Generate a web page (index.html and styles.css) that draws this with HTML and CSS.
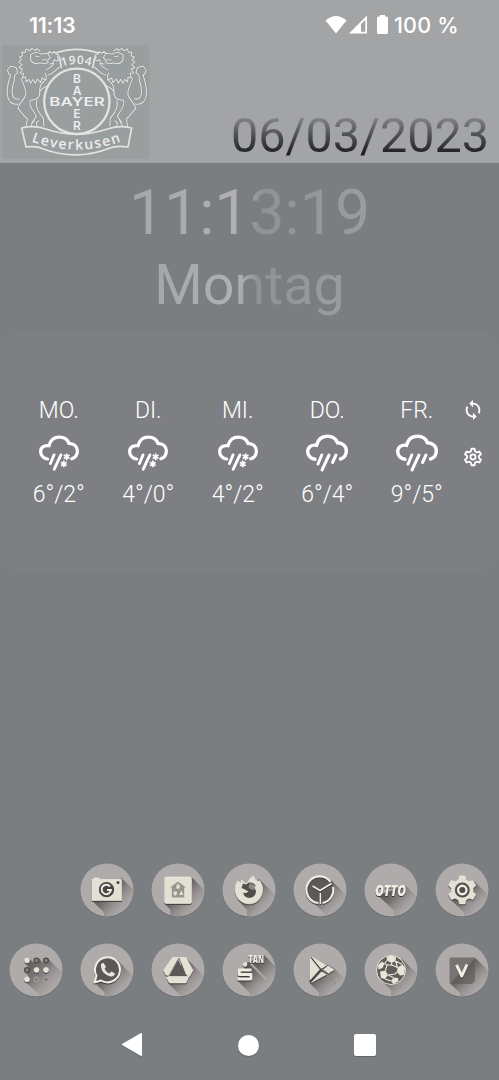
FILE: index.html
```html
<!DOCTYPE html>
<html lang="de">
<head>
  <meta charset="UTF-8" />
  <title>Homescreen</title>
  <link rel="stylesheet" href="styles.css">
</head>
<body>

<!--  SHARED SHAPES  -->
<svg class="defs" width="0" height="0">
  <defs>
    <linearGradient id="fade" gradientUnits="userSpaceOnUse" x1="22" y1="22" x2="45" y2="45">
      <stop offset="0" stop-color="#4f4c4b"/>
      <stop offset="0.4" stop-color="#6a6665" stop-opacity=".9"/>
      <stop offset="1" stop-color="#a39e9e" stop-opacity=".3"/>
    </linearGradient>
    <clipPath id="round"><circle cx="27" cy="27" r="26.5"/></clipPath>
    <g id="disc">
      <circle cx="27" cy="27.6" r="26.7" fill="#656768"/>
      <circle cx="27" cy="27" r="26.6" fill="#b0abab"/>
    </g>
    <g id="cloud" fill="none" stroke="#fff" stroke-linecap="round">
      <path stroke-width="3.4" d="M9 24.800C5 24.500 1.700 21 1.700 17C1.700 12.800 5 10 10.500 10.800C12 5 16 1.800 21.300 1.800C26.500 1.800 30 4.500 31.500 8.300C36.500 8.300 40.300 11.600 40.300 16.200C40.300 20.500 38 23.500 34.500 24.500"/>
      <path stroke-width="3" d="M15.800 20.500L12 29.500M23 20.500L16 35.500"/>
    </g>
    <path id="flakes" d="M29 19V26M26 20.700L32 24.300M32 20.700L26 24.300M26 26.500V33.500M23 28.200L29 31.800M29 28.200L23 31.800"/>
  </defs>
</svg>

<header>
  <div class="status">
    <span class="clock">11:13</span>
    <svg class="signals" width="63" height="20" viewBox="0 0 63 20">
      <path fill="#fff" d="M.5 5.500Q11 -3.500 21.500 5.500L11 18.500Z"/>
      <path fill="#fff" fill-rule="evenodd" d="M24 18.500L42 .5V18.500ZM36 16.800H40.300V5L36 9Z"/>
      <path fill="#fff" d="M55 0H60V1.500H61.500Q63 1.500 63 3V17.500Q63 19 61.500 19H53.500Q52 19 52 17.500V3Q52 1.500 53.500 1.500H55Z"/>
    </svg>
    <span class="percent">100 %</span>
  </div>
  <div class="banner">
    <svg class="crest" width="147" height="114" viewBox="6 135 441 342">
      <defs>
        <path id="ribbonLine" d="M94 424Q230 474 368 423"/>
        <path id="yearLine" d="M186 200Q230 184 278 199"/>
        <g id="lion">
          <path d="M22 210L32 198L49 203L53 218L44 226L43 240C36 262 32 280 41 292Q47 300 59 296M22 210L27 222L32 225C20 260 17 290 31 306Q42 316 56 311"/>
          <path d="M120 153L110 146L106 152L96 145L90 152L78 147L76 157L65 156L68 167L58 171L65 179L56 187L66 193L57 203L68 207L60 219L71 220L67 234L77 231L78 246L87 238L92 250L99 238L106 250L112 237L122 248L126 234L137 240L139 228L134 218"/>
          <path d="M92 164Q108 152 124 162L143 160L151 173L143 181L144 188L131 191L120 188Q101 196 92 181ZM105 168L118 170M126 180L141 179"/>
          <path d="M143 161L149 154L156 160L163 154L168 163L176 165L172 173L179 178L169 183L163 178L158 190L148 193M162 190Q153 204 137 209M178 201L166 212Q155 224 143 226"/>
          <path d="M63 235C72 258 80 270 77 285C70 304 56 310 54 325L72 347L82 357L78 380M139 238Q117 253 119 275Q122 299 91 301M119 275Q128 263 140 258M91 301Q85 314 100 333L109 349L96 368L94 380M111 300Q105 317 117 337L130 355L132 379M117 361L109 369L111 380M103 360L98 369"/>
        </g>
      </defs>
      <rect class="crest-bg" x="6" y="135" width="441" height="342"/>
      <g class="crest-shade">
        <use href="#lion"/>
        <use href="#lion" transform="translate(461 0) scale(-1 1)"/>
      </g>
      <g class="crest-line">
        <use href="#lion"/>
        <use href="#lion" transform="translate(461 0) scale(-1 1)"/>
        <path stroke-width="5" d="M165 160Q230 136 297 160M178 169L184 204M285 169L278 204"/>
        <circle cx="230.500" cy="304" r="98" stroke-width="7"/>
        <path stroke-width="5" d="M65 384Q105 374 140 388Q230 418 320 388Q355 374 395 384L384 441Q350 436 330 444Q230 484 130 447Q110 437 78 441Z"/>
      </g>
      <g class="crest-text">
        <text x="148" y="318" textLength="166" lengthAdjust="spacingAndGlyphs">BAYER</text>
        <text text-anchor="middle"><tspan x="231" y="250">B</tspan><tspan x="231" y="285">A</tspan><tspan x="231" y="353">E</tspan><tspan x="231" y="390">R</tspan></text>
        <text class="year"><textPath href="#yearLine">1904</textPath></text>
        <text class="city"><textPath href="#ribbonLine">Leverkusen</textPath></text>
      </g>
    </svg>
    <div class="date">06/03/2023</div>
  </div>
</header>

<div class="time"><span>11:13:19</span></div>
<div class="weekday"><span>Montag</span></div>

<!--  WEATHER  -->
<section class="weather">
  <div class="day">
    <span>MO.</span>
    <svg width="40" height="36" viewBox="0 0 42 37"><use href="#cloud"/><use class="flake" href="#flakes"/></svg>
    <span>6°/2°</span>
  </div>
  <div class="day">
    <span>DI.</span>
    <svg width="40" height="36" viewBox="0 0 42 37"><use href="#cloud"/><use class="flake" href="#flakes"/></svg>
    <span>4°/0°</span>
  </div>
  <div class="day">
    <span>MI.</span>
    <svg width="40" height="36" viewBox="0 0 42 37"><use href="#cloud"/><use class="flake" href="#flakes"/></svg>
    <span>4°/2°</span>
  </div>
  <div class="day">
    <span>DO.</span>
    <svg width="42" height="38" viewBox="0 0 42 37"><use href="#cloud"/><path class="drop" d="M30 20.500L26.500 28"/></svg>
    <span>6°/4°</span>
  </div>
  <div class="day">
    <span>FR.</span>
    <svg width="42" height="38" viewBox="0 0 42 37"><use href="#cloud"/><path class="drop" d="M30 20.500L26.500 28"/></svg>
    <span>9°/5°</span>
  </div>
  <div class="tools">
    <svg width="22" height="22" viewBox="0 0 24 24"><path fill="#fff" d="M12 4V1L8 5l4 4V6c3.310 0 6 2.690 6 6 0 1.010-.25 1.970-.7 2.800l1.460 1.460C19.540 15.030 20 13.570 20 12c0-4.420-3.580-8-8-8zm0 14c-3.310 0-6-2.690-6-6 0-1.010.25-1.970.7-2.800L5.240 7.740C4.460 8.970 4 10.430 4 12c0 4.420 3.580 8 8 8v3l4-4-4-4v3z"/></svg>
    <svg width="22" height="22" viewBox="0 0 24 24" fill="none" stroke="#fff" stroke-width="2" stroke-linejoin="round"><path d="M10.300 3H13.700L14.200 5.800L16.300 7L19 6L20.700 9L18.500 10.800V13.200L20.700 15L19 18L16.300 17L14.200 18.200L13.700 21H10.300L9.800 18.200L7.700 17L5 18L3.300 15L5.500 13.200V10.800L3.300 9L5 6L7.700 7L9.800 5.800Z"/><circle cx="12" cy="12" r="2.800"/></svg>
  </div>
</section>

<!--  APPS  -->
<main class="apps">
  <!-- camera -->
  <svg class="app first" viewBox="0 0 54 54">
    <use href="#disc"/>
    <path class="long" d="M41.500 15L54 27.500V54H24V49.500L12 37.500Z"/>
    <g class="raised">
      <path d="M13 16.500H14V15H19V16.500H41.500V37.500H12V16.500Z"/>
    </g>
    <circle cx="26.500" cy="26.700" r="7.600" fill="#484645"/>
    <path class="line" stroke-width="2" d="M30 23.500A4.700 4.700 0 1 0 31 27H27"/>
    <circle cx="38" cy="19.500" r="1.500" fill="#484645"/>
  </svg>
  <!-- smart home -->
  <svg class="app" viewBox="0 0 54 54">
    <use href="#disc"/>
    <path class="long" d="M40.500 14L54 27.500V54H19.500V47L13.500 40.500Z"/>
    <rect class="raised" x="13.500" y="14" width="27" height="26.500" rx="1.500"/>
    <path fill="#98958f" d="M27 18.500L35 24.500H33.200V34.500H20.800V24.500H19Z"/>
    <path fill="#e3dfd2" d="M27 20.500C30 23 29 25.800 27 26C25 25.800 24.500 23 27 20.500M22.500 28.500H26V31L24.200 33L22.500 31ZM28.500 31L30.500 27.500L32 31V32H28.500Z"/>
  </svg>
  <!-- firefox -->
  <svg class="app" viewBox="0 0 54 54">
    <use href="#disc"/>
    <path class="long" d="M37 16L54 33V54H25V47L16 37Z"/>
    <path class="raised" d="M15.500 18L19 20.500L19.500 17L24 21L26.500 18.500Q28 14 31.500 13Q33 17.500 36 18.500L37.500 17.500Q41.500 23 40.500 28.500C39.500 36 34 41 27.500 41C20 41 13.500 35.500 13.200 27.500Q13 22 15.500 18Z"/>
    <path fill="#504d4b" d="M21 20.500L24 21.500L27 19.500Q32 19 34 23.500L31.500 23L34 28Q34 34 27.500 35Q22 34.500 21 29.500Q23.500 31 26.500 28.500L22 26L19.500 25Z"/>
    <path fill="#8d8984" d="M28 20L33 22.500L32 27Q28 27 26.500 24Z"/>
  </svg>
  <!-- clock -->
  <svg class="app" viewBox="0 0 54 54">
    <use href="#disc"/>
    <path class="long" d="M38 17L54 33V54H31V50L17 36Z"/>
    <circle cx="27" cy="27" r="13.500" fill="#5c5a59"/>
    <g class="relief">
      <path class="line" stroke-width="2.200" d="M37.500 19A13.300 13.300 0 1 0 25.500 40M29.500 40A13.300 13.300 0 0 0 40 24"/>
      <path class="line" stroke-width="1.700" d="M19.500 23L27 27.500L38.500 20.500"/>
      <path class="line" stroke="#a09d99" stroke-width="1.500" d="M27.300 30V41"/>
    </g>
  </svg>
  <!-- otto -->
  <svg class="app" viewBox="0 0 54 54">
    <use href="#disc"/>
    <path class="long" d="M42 23L53 34V54H30V47.500L13.500 32Z"/>
    <text class="logo otto" x="11" y="32.500" textLength="31" lengthAdjust="spacingAndGlyphs">OTTO</text>
  </svg>
  <!-- settings -->
  <svg class="app" viewBox="0 0 54 54">
    <use href="#disc"/>
    <path class="long" d="M38 17L54 33V54H29V49.500L17 38Z"/>
    <path class="raised" fill-rule="evenodd" d="M24.500 13H30L31 17L34 18.700L38 17.500L40.800 22.500L38 25.300V28.700L40.800 31.500L38 36.500L34 35.300L31 37L30 41H24.500L23.500 37L20.300 35.300L16.300 36.500L13.500 31.500L16.500 28.700V25.300L13.500 22.500L16.300 17.500L20.300 18.700L23.500 17Z"/>
    <circle cx="27.300" cy="27" r="7.500" fill="#504e4d"/>
    <circle class="line" cx="27.300" cy="27" r="4.200" stroke-width="2.400"/>
  </svg>

  <!-- dots -->
  <svg class="app" viewBox="0 0 54 54">
    <use href="#disc"/>
    <path class="long" opacity=".75" d="M39 15.500L54 30.500V54H30V51L16 38.500L20 34L16 29L20 25L16 19.500L20 15.500L25 20L30 15.500L34 20Z"/>
    <g fill="#858180" stroke="#4d4b4a" stroke-width="1.300">
      <circle cx="27.500" cy="17.500" r="2.400"/><circle cx="37" cy="17.500" r="2.400"/><circle cx="18" cy="27" r="2.400"/>
    </g>
    <g fill="#858180" stroke="#aaa6a3" stroke-width="1">
      <circle cx="27.500" cy="36.500" r="2.500"/><circle cx="37" cy="36.500" r="2.500"/>
    </g>
    <g class="raised">
      <circle cx="18" cy="17.500" r="2.500"/><circle cx="27.500" cy="27" r="2.500"/><circle cx="37" cy="27" r="2.500"/><circle cx="18" cy="36.500" r="2.500"/>
    </g>
  </svg>
  <!-- whatsapp -->
  <svg class="app" viewBox="0 0 54 54">
    <use href="#disc"/>
    <path class="long" d="M37 17L54 34V54H24.500V49.500L14 39Z"/>
    <path class="relief" fill="#5b5958" stroke="#f0eee3" stroke-width="2" stroke-linejoin="round" d="M14.500 39.500L16.500 32.800A12.500 12.500 0 1 1 21 37.500Z"/>
    <path fill="#e9e6da" d="M21 21L23.500 19.800L26 24L24.500 26Q26.500 29.500 29.500 30.500L31.500 28.500L35 30.500Q34 34 30.500 33.500C24.500 32 20.500 27.500 21 21Z"/>
  </svg>
  <!-- drive -->
  <svg class="app" viewBox="0 0 54 54">
    <use href="#disc"/>
    <path class="long" d="M35 15L54 34V54H30V53L17 40Z"/>
    <path fill="#5b5958" d="M27 17L36 34H18Z"/>
    <g class="raised">
      <path d="M21.500 14.500H27.500L17.500 32.500L15 32L12.500 27.500Z"/>
      <path d="M28.500 14.500H35L42 27.500L38.500 33.500L35.500 32Z"/>
      <path d="M17.500 33.500H38L35 40H18.500L15.500 35Z"/>
    </g>
  </svg>
  <!-- s-tan -->
  <svg class="app" viewBox="0 0 54 54">
    <use href="#disc"/>
    <path class="long" d="M42 12L53 23V54H28V50L16 38L25 20Z"/>
    <path d="M28 20L45 37" stroke="#aaa6a6" stroke-width="2.200"/>
    <text class="logo tan" x="26.500" y="19.500" textLength="15.500" lengthAdjust="spacingAndGlyphs">TAN</text>
    <circle class="raised" cx="23" cy="21.500" r="2"/>
    <path class="relief line" stroke-width="2.800" stroke-linejoin="round" d="M29.500 27H17.200V31.500H29V36H15.500"/>
  </svg>
  <!-- play -->
  <svg class="app" viewBox="0 0 54 54">
    <use href="#disc"/>
    <path class="long" d="M18 14L41 25L54 38V54H26V49.500L16.500 40Z"/>
    <path fill="#4b4847" d="M17 14L41 27L17 40.500Z"/>
    <g class="raised">
      <path d="M17 14.500L26.500 26.500L17 37Z"/>
      <path d="M18.800 14L33.500 22.200L28.300 25.800Z"/>
      <path d="M35 23L41 26.800L35.500 30.300L30.500 26.500Z"/>
      <path d="M18.500 39.500L28.500 28.800L33.300 31.500Z"/>
    </g>
    <path d="M28 25L43 41" stroke="#8b8785" stroke-width="1"/>
  </svg>
  <!-- football -->
  <svg class="app" viewBox="0 0 54 54">
    <use href="#disc"/>
    <path class="long" d="M38 16L54 32V54H27V47L17 37Z"/>
    <circle cx="27" cy="27" r="14.500" fill="#5f5d5b" stroke="#e8e5d9" stroke-width="1"/>
    <g fill="#e7e4d8">
      <path d="M22.500 13.500L27.500 12.500L32 14L31.500 18L27.500 20L23 17.500Z"/>
      <path d="M33.500 24.500L38.500 21.500L41 25L40 32L36 32.500L33 29Z"/>
      <path d="M29.500 34.500L34 35L34.500 38L29.500 41L27 38Z"/>
      <path d="M16 28.500L21.500 27.500L24 32L21 36L17 35Z"/>
      <path d="M14 22L18 18.500L20.500 20.500L18.500 25L14.500 26.500Z"/>
    </g>
    <path class="line" stroke-width="1.100" d="M31.500 18L33.500 24.500M27.500 20L28 23M23 17.500L20.500 20.500M20.500 20.500L23 22L28 22L33.500 24.500M23 22L21.500 27.500M24 32L29.500 34.500M24 32L31 31L33 29M31.500 18L38.500 21.500M21 36L27 38"/>
  </svg>
  <!-- v -->
  <svg class="app" viewBox="0 0 54 54">
    <use href="#disc"/>
    <path class="long" d="M40.500 15L54 28.500V54H25V50L15 40.500Z"/>
    <path d="M14.500 40V16Q14.500 14.500 16 14.500H40V38L37 41H17Z" fill="#5f5d5c" fill-opacity=".7"/>
    <path class="relief line" stroke-width="3" stroke-linejoin="round" d="M21.500 22L26.800 33L32 21.500"/>
  </svg>
</main>

<nav class="navbar">
  <svg width="22" height="26" viewBox="0 0 22 26"><path d="M20 2V23L2 12.500Z" fill="#fff" stroke="#fff" stroke-width="2" stroke-linejoin="round"/></svg>
  <span class="home"></span>
  <span class="recent"></span>
</nav>

</body>
</html>
```
FILE: styles.css
```css
/* ----------  GLOBAL  ---------- */
*{box-sizing:border-box}
html,body{margin:0;padding:0}
body{width:499px;height:1080px;overflow:hidden;background:#7a7e80;color:#fff;font-family:Roboto,sans-serif;display:flex;flex-direction:column}
svg{display:block;flex:none}
.defs{height:0}

/* ----------  HEADER  ---------- */
header{height:163px;background:#a3a4a6}
.status{height:45px;padding:5px 38px 0 29px;display:flex;align-items:center;font-family:Inter,sans-serif;font-size:21.500px}
.clock{font-weight:600;width:296px;letter-spacing:-.3px}
.percent{margin-left:6px;font-weight:500;letter-spacing:.2px;white-space:nowrap}
.banner{height:118px;padding:0 10px 0 2px;display:flex;justify-content:space-between}
.date{margin-top:62px;height:56px;font-size:48.500px;line-height:57px;background:linear-gradient(#8b8c8f 15%,#505154 50%,#1c1d20 85%);-webkit-background-clip:text;background-clip:text;color:transparent}

/* ----------  CREST  ---------- */
.crest-bg{fill:#999e9f}
.crest-line,.crest-shade{fill:none;stroke:#e2e4e4;stroke-width:3.200;stroke-linejoin:round}
.crest-shade{stroke:#8b9090;stroke-width:6}
.crest-text{fill:#eceded;font-family:Inter,sans-serif;font-weight:600;font-size:36px}
.crest-text .year{font-family:"Open Sans",sans-serif;font-size:35px;letter-spacing:2.500px}
.crest-text .city{font-family:"Open Sans",sans-serif;font-size:42px;letter-spacing:4.500px}

/* ----------  TIME  ---------- */
.time{height:91px;padding-top:13px;text-align:center;font-size:62.500px;line-height:74px}
.weekday{height:77px;text-align:center;font-size:55.500px;line-height:63px}
.time span,.weekday span{display:inline-block;background:linear-gradient(95deg,#a4a6a9,#b1b1b4 44%,#8f9194 54%,#9b9da0);-webkit-background-clip:text;background-clip:text;color:transparent}

/* ----------  WEATHER  ---------- */
.weather{height:241px;padding:66px 9px 0 14px;border-radius:22px;background:#7e7f83;display:flex}
.day{width:89.500px;height:111px;display:flex;flex-direction:column;align-items:center;justify-content:space-between;font-size:23px;font-weight:300;line-height:27px}
.flake{stroke:#fff;stroke-width:1.800;fill:none}
.drop{stroke:#fff;stroke-width:3;stroke-linecap:round;fill:none}
.tools{padding-top:2px;display:flex;flex-direction:column;gap:25px}

/* ----------  APPS  ---------- */
.apps{width:498px;margin-top:290.500px;display:grid;grid-template-columns:repeat(7,1fr);row-gap:26px;justify-items:center}
.app{width:54px;height:54px}
.first{grid-column:2}
.long{fill:url(#fade);clip-path:url(#round)}
.raised,.relief{filter:drop-shadow(.7px 1px .6px #3b3938)}
.raised{fill:#e4e0d3;stroke:#f3f1e9;stroke-width:.6}
.line{fill:none;stroke:#eeebe0}
.logo{fill:#f0eee4;font-family:"Open Sans",sans-serif;font-weight:800;filter:drop-shadow(.7px 1px .5px #3b3938)}
.otto{font-size:15px;font-style:italic}
.tan{font-size:10px}

/* ----------  NAVIGATION  ---------- */
.navbar{margin-top:35.500px;padding:0 123px 0 121px;display:flex;justify-content:space-between;align-items:center}
.navbar svg,.home,.recent{filter:drop-shadow(0 1px .7px #626567)}
.home{width:21px;height:21px;border-radius:50%;background:#fff}
.recent{width:22px;height:22px;border-radius:2px;background:#fff}
```
